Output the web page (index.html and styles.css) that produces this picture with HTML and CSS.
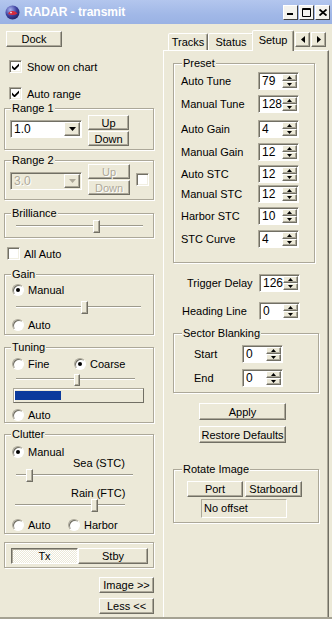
FILE: index.html
```html
<html>
<head>
    <link rel="stylesheet" href="styles.css">
</head>
<body>
<div class="window">
    <div class="titlebar">
        <svg class="app-icon" width="15" height="15" viewBox="0 0 15 15">
            <defs>
                <radialGradient id="ball" cx="0.35" cy="0.3" r="0.8">
                    <stop offset="0" stop-color="#a9b2ee"/>
                    <stop offset="0.55" stop-color="#3c409e"/>
                    <stop offset="1" stop-color="#1c1d58"/>
                </radialGradient>
            </defs>
            <circle cx="7.5" cy="7.5" r="7" fill="url(#ball)"/>
            <path d="M3 8.5 Q4.5 5.5 8 6 Q11 6.2 12.5 8.5 Q9.5 10.5 6.5 10 Q4 9.8 3 8.5 Z" fill="#d42a3c"/>
            <circle cx="6" cy="7.6" r="0.8" fill="#fff"/>
        </svg>
        <span class="title">RADAR - transmit</span>
        <div class="caption-buttons">
            <span class="cap-btn"><svg width="7" height="8"><rect x="0" y="5" width="6" height="2" fill="#000"/></svg></span>
            <span class="cap-btn"><svg width="9" height="9"><path d="M0.5 0.5h8v8h-8z M0 1.5h9" stroke="#000" fill="none"/></svg></span>
            <span class="cap-btn"><svg width="8" height="7"><path d="M0.5 0.5l7 6M7.5 0.5l-7 6" stroke="#000" stroke-width="1.8"/></svg></span>
        </div>
    </div>

    <div class="client">
        <div class="left">
            <button class="button dock">Dock</button>
            <label class="check show-chart"><span class="box"><svg width="7" height="7"><path d="M0 2.5L2.5 5L7 0.5V3L2.5 7.5L0 5Z"/></svg></span>Show on chart</label>
            <label class="check auto-range"><span class="box"><svg width="7" height="7"><path d="M0 2.5L2.5 5L7 0.5V3L2.5 7.5L0 5Z"/></svg></span>Auto range</label>

            <fieldset class="group range1">
                <legend>Range 1</legend>
                <div class="range-row">
                    <div class="combo">
                        <span class="combo-val">1.0</span>
                        <span class="combo-btn"><svg width="7" height="4"><path d="M0 0h7L3.5 4z"/></svg></span>
                    </div>
                    <div class="updown">
                        <button class="button">Up</button>
                        <button class="button">Down</button>
                    </div>
                </div>
            </fieldset>

            <fieldset class="group range2">
                <legend>Range 2</legend>
                <div class="range-row">
                    <div class="combo disabled">
                        <span class="combo-val">3.0</span>
                        <span class="combo-btn"><svg width="7" height="4"><path d="M0 0h7L3.5 4z" fill="#aca899"/></svg></span>
                    </div>
                    <div class="updown">
                        <button class="button" disabled>Up</button>
                        <button class="button" disabled>Down</button>
                    </div>
                    <span class="box"></span>
                </div>
            </fieldset>

            <fieldset class="group brilliance">
                <legend>Brilliance</legend>
                <div class="slider brill-slider"><div class="track"></div><span class="thumb" style="left: 77px"></span></div>
            </fieldset>

            <label class="check all-auto"><span class="box"></span>All Auto</label>

            <fieldset class="group gain">
                <legend>Gain</legend>
                <label class="opt gain-manual"><span class="radio on"></span>Manual</label>
                <div class="slider gain-slider"><div class="track"></div><span class="thumb" style="left: 65px"></span></div>
                <label class="opt gain-auto"><span class="radio"></span>Auto</label>
            </fieldset>

            <fieldset class="group tuning">
                <legend>Tuning</legend>
                <div class="opt-row tune-mode">
                    <label class="opt fine"><span class="radio"></span>Fine</label>
                    <label class="opt"><span class="radio on"></span>Coarse</label>
                </div>
                <div class="slider tune-slider"><div class="track"></div><span class="thumb small" style="left: 58px"></span></div>
                <div class="progress"><div class="progress-fill" style="width: 46px"></div></div>
                <label class="opt tune-auto"><span class="radio"></span>Auto</label>
            </fieldset>

            <fieldset class="group clutter">
                <legend>Clutter</legend>
                <label class="opt clutter-manual"><span class="radio on"></span>Manual</label>
                <div class="slider-label sea-label">Sea (STC)</div>
                <div class="slider sea-slider"><div class="track"></div><span class="thumb" style="left: 10px"></span></div>
                <div class="slider-label rain-label">Rain (FTC)</div>
                <div class="slider rain-slider"><div class="track"></div><span class="thumb" style="left: 76px"></span></div>
                <div class="opt-row clutter-mode">
                    <label class="opt auto-opt"><span class="radio"></span>Auto</label>
                    <label class="opt"><span class="radio"></span>Harbor</label>
                </div>
            </fieldset>

            <div class="txbox">
                <button class="button tx pressed">Tx</button>
                <button class="button stby">Stby</button>
            </div>

            <button class="button side-btn image-btn">Image &gt;&gt;</button>
            <button class="button side-btn less-btn">Less &lt;&lt;</button>
        </div>

        <div class="tabctl">
            <div class="tab-strip">
                <span class="tab tracks">Tracks</span>
                <span class="tab status">Status</span>
                <span class="tab selected">Setup</span>
                <div class="tab-scroll">
                    <span class="scroll-btn"><svg width="4" height="7"><path d="M4 0v7L0 3.5z"/></svg></span>
                    <span class="scroll-btn"><svg width="4" height="7"><path d="M0 0v7L4 3.5z"/></svg></span>
                </div>
            </div>

            <div class="tab-panel">
                <fieldset class="group preset">
                    <legend>Preset</legend>
                    <div class="spin-row p1"><span class="spin-label">Auto Tune</span><div class="spin"><span class="spin-val">79</span><span class="spin-btns"><span class="spin-btn"><svg width="5" height="3"><path d="M2.5 0L5 3H0z"/></svg></span><span class="spin-btn"><svg width="5" height="3"><path d="M0 0h5L2.5 3z"/></svg></span></span></div></div>
                    <div class="spin-row p2"><span class="spin-label">Manual Tune</span><div class="spin"><span class="spin-val">128</span><span class="spin-btns"><span class="spin-btn"><svg width="5" height="3"><path d="M2.5 0L5 3H0z"/></svg></span><span class="spin-btn"><svg width="5" height="3"><path d="M0 0h5L2.5 3z"/></svg></span></span></div></div>
                    <div class="spin-row p3"><span class="spin-label">Auto Gain</span><div class="spin"><span class="spin-val">4</span><span class="spin-btns"><span class="spin-btn"><svg width="5" height="3"><path d="M2.5 0L5 3H0z"/></svg></span><span class="spin-btn"><svg width="5" height="3"><path d="M0 0h5L2.5 3z"/></svg></span></span></div></div>
                    <div class="spin-row p4"><span class="spin-label">Manual Gain</span><div class="spin"><span class="spin-val">12</span><span class="spin-btns"><span class="spin-btn"><svg width="5" height="3"><path d="M2.5 0L5 3H0z"/></svg></span><span class="spin-btn"><svg width="5" height="3"><path d="M0 0h5L2.5 3z"/></svg></span></span></div></div>
                    <div class="spin-row p5"><span class="spin-label">Auto STC</span><div class="spin"><span class="spin-val">12</span><span class="spin-btns"><span class="spin-btn"><svg width="5" height="3"><path d="M2.5 0L5 3H0z"/></svg></span><span class="spin-btn"><svg width="5" height="3"><path d="M0 0h5L2.5 3z"/></svg></span></span></div></div>
                    <div class="spin-row p6"><span class="spin-label">Manual STC</span><div class="spin"><span class="spin-val">12</span><span class="spin-btns"><span class="spin-btn"><svg width="5" height="3"><path d="M2.5 0L5 3H0z"/></svg></span><span class="spin-btn"><svg width="5" height="3"><path d="M0 0h5L2.5 3z"/></svg></span></span></div></div>
                    <div class="spin-row p7"><span class="spin-label">Harbor STC</span><div class="spin"><span class="spin-val">10</span><span class="spin-btns"><span class="spin-btn"><svg width="5" height="3"><path d="M2.5 0L5 3H0z"/></svg></span><span class="spin-btn"><svg width="5" height="3"><path d="M0 0h5L2.5 3z"/></svg></span></span></div></div>
                    <div class="spin-row p8"><span class="spin-label">STC Curve</span><div class="spin"><span class="spin-val">4</span><span class="spin-btns"><span class="spin-btn"><svg width="5" height="3"><path d="M2.5 0L5 3H0z"/></svg></span><span class="spin-btn"><svg width="5" height="3"><path d="M0 0h5L2.5 3z"/></svg></span></span></div></div>
                </fieldset>

                <div class="spin-row trigger"><span class="spin-label">Trigger Delay</span><div class="spin"><span class="spin-val">126</span><span class="spin-btns"><span class="spin-btn"><svg width="5" height="3"><path d="M2.5 0L5 3H0z"/></svg></span><span class="spin-btn"><svg width="5" height="3"><path d="M0 0h5L2.5 3z"/></svg></span></span></div></div>
                <div class="spin-row heading"><span class="spin-label">Heading Line</span><div class="spin"><span class="spin-val">0</span><span class="spin-btns"><span class="spin-btn"><svg width="5" height="3"><path d="M2.5 0L5 3H0z"/></svg></span><span class="spin-btn"><svg width="5" height="3"><path d="M0 0h5L2.5 3z"/></svg></span></span></div></div>

                <fieldset class="group sector">
                    <legend>Sector Blanking</legend>
                    <div class="spin-row s1"><span class="spin-label">Start</span><div class="spin"><span class="spin-val">0</span><span class="spin-btns"><span class="spin-btn"><svg width="5" height="3"><path d="M2.5 0L5 3H0z"/></svg></span><span class="spin-btn"><svg width="5" height="3"><path d="M0 0h5L2.5 3z"/></svg></span></span></div></div>
                    <div class="spin-row s2"><span class="spin-label">End</span><div class="spin"><span class="spin-val">0</span><span class="spin-btns"><span class="spin-btn"><svg width="5" height="3"><path d="M2.5 0L5 3H0z"/></svg></span><span class="spin-btn"><svg width="5" height="3"><path d="M0 0h5L2.5 3z"/></svg></span></span></div></div>
                </fieldset>

                <button class="button wide apply">Apply</button>
                <button class="button wide restore">Restore Defaults</button>

                <fieldset class="group rotate">
                    <legend>Rotate Image</legend>
                    <div class="rotate-row">
                        <button class="button port">Port</button>
                        <button class="button starboard">Starboard</button>
                    </div>
                    <div class="static">No offset</div>
                </fieldset>
            </div>
        </div>
    </div>
</div>
</body>
</html>
```

FILE: styles.css
```css
body {
    margin: 0;
    font-family: "Liberation Sans", Arial, sans-serif;
    font-size: 11px;
    color: #000;
    background-color: #ece9d8;
}
.window {
    width: 332px;
    height: 619px;
    box-sizing: border-box;
    display: flex;
    flex-direction: column;
    overflow: hidden;
    border-bottom: 2px solid #a5a293;
}

/* title bar */
.titlebar {
    flex: none;
    height: 24px;
    display: flex;
    align-items: center;
    padding-left: 5px;
    background: linear-gradient(#b3c6ee, #a1b8e7 60%, #9ab2e4);
}
.app-icon {
    flex: none;
}
.title {
    margin-left: 4px;
    color: #fff;
    font-size: 12px;
    font-weight: bold;
}
.caption-buttons {
    margin-left: auto;
    margin-right: 2px;
    display: flex;
    gap: 1px;
}
.cap-btn {
    width: 15px;
    height: 15px;
    box-sizing: border-box;
    display: flex;
    align-items: center;
    justify-content: center;
    background-color: #f4f3ee;
    border: 1px solid;
    border-color: #fff #404040 #404040 #fff;
}

.client {
    flex: 1;
    display: flex;
    min-height: 0;
}

/* common controls */
.button {
    font: inherit;
    color: #000;
    background-color: #ece9d8;
    border: 1px solid;
    border-color: #fff #716f64 #716f64 #fff;
    box-shadow: inset -1px -1px #aca899;
    padding: 0;
    height: 16px;
    box-sizing: border-box;
}
.button:disabled {
    color: #aca899;
    text-shadow: 1px 1px #fff;
}
.button.pressed {
    border-color: #716f64 #fff #fff #716f64;
    box-shadow: inset 1px 1px #aca899;
    background: repeating-conic-gradient(#fff 0 25%, #ece9d8 0 50%) 0 0 / 2px 2px;
}
.check {
    display: flex;
    align-items: center;
    gap: 5px;
    height: 13px;
}
.box {
    flex: none;
    width: 13px;
    height: 13px;
    box-sizing: border-box;
    display: flex;
    align-items: center;
    justify-content: center;
    background-color: #fff;
    border: 1px solid;
    border-color: #aca899 #fff #fff #aca899;
    box-shadow: inset 1px 1px #716f64, inset -1px -1px #f1efe2;
}
.opt {
    display: flex;
    align-items: center;
    gap: 4px;
    height: 14px;
    margin-left: 2px;
}
.opt-row {
    display: flex;
}
.radio {
    flex: none;
    width: 12px;
    height: 12px;
    box-sizing: border-box;
    border-radius: 50%;
    display: flex;
    align-items: center;
    justify-content: center;
    background-color: #fff;
    border: 1px solid;
    border-color: #aca899 #fff #fff #aca899;
    box-shadow: inset 1px 1px #716f64;
}
.radio.on::after {
    content: "";
    width: 4px;
    height: 4px;
    border-radius: 50%;
    background-color: #000;
}
.group {
    margin: 0;
    padding: 0 4px 0 5px;
    min-width: 0;
    width: 150px;
    box-sizing: border-box;
    border: 1px solid #aca899;
    box-shadow: inset 1px 1px #fff, 1px 1px #fff;
}
.group legend {
    padding: 0 1px;
    margin-left: 1px;
    line-height: 12px;
    background-color: #ece9d8;
}
.combo {
    display: flex;
    width: 72px;
    height: 18px;
    box-sizing: border-box;
    padding: 1px;
    background-color: #fff;
    border: 1px solid;
    border-color: #aca899 #fff #fff #aca899;
    box-shadow: inset 1px 1px #716f64;
}
.combo-val {
    flex: 1;
    padding-left: 2px;
    font-size: 12px;
    line-height: 14px;
}
.combo-btn {
    width: 16px;
    display: flex;
    align-items: center;
    justify-content: center;
    background-color: #ece9d8;
    border: 1px solid;
    border-color: #fff #716f64 #716f64 #fff;
    box-shadow: inset -1px -1px #aca899;
    box-sizing: border-box;
}
.combo.disabled {
    background-color: #ece9d8;
}
.combo.disabled .combo-val {
    color: #aca899;
    text-shadow: 1px 1px #fff;
}
.slider {
    position: relative;
    height: 14px;
    box-sizing: border-box;
    padding-top: 6px;
}
.track {
    border-top: 1px solid #9d9a8c;
    border-bottom: 1px solid #fff;
}
.thumb {
    position: absolute;
    top: 1px;
    width: 7px;
    height: 13px;
    box-sizing: border-box;
    background-color: #ece9d8;
    border: 1px solid;
    border-color: #fff #716f64 #716f64 #fff;
    box-shadow: inset -1px -1px #aca899;
}
.thumb.small {
    top: 2px;
    width: 6px;
    height: 12px;
}
.slider-label {
    line-height: 12px;
}
.progress {
    width: 131px;
    height: 15px;
    box-sizing: border-box;
    padding: 2px 1px;
    border: 1px solid;
    border-color: #aca899 #716f64 #716f64 #aca899;
    box-shadow: inset 1px 1px #fff;
}
.progress-fill {
    height: 100%;
    background-color: #0b3a9c;
}

/* left column */
.left {
    flex: none;
    width: 159px;
    box-sizing: border-box;
    padding: 7px 0 0 4px;
    display: flex;
    flex-direction: column;
    align-items: flex-start;
}
.dock {
    width: 56px;
    margin-left: 2px;
}
.show-chart {
    margin: 13px 0 0 5px;
}
.auto-range {
    margin: 14px 0 0 5px;
}
.range-row {
    display: flex;
    align-items: flex-start;
    gap: 6px;
}
.range-row .combo {
    margin-top: 6px;
}
.updown {
    display: flex;
    flex-direction: column;
    gap: 1px;
}
.updown .button {
    width: 41px;
    height: 15px;
}
.range1 {
    margin-top: 2px;
    padding-bottom: 3px;
}
.range1 .updown {
    margin-top: 1px;
}
.range2 {
    margin-top: 4px;
    padding-bottom: 4px;
}
.range2 .updown {
    margin-top: -2px;
}
.range2 .updown .button {
    width: 42px;
}
.range2 .box {
    margin-top: 7px;
}
.brilliance {
    margin-top: 7px;
    padding-bottom: 4px;
}
.brill-slider {
    margin-left: 6px;
    width: 127px;
}
.all-auto {
    margin: 9px 0 0 3px;
    gap: 4px;
}
.gain {
    margin-top: 8px;
    padding-bottom: 2px;
}
.gain-manual {
    margin-top: 3px;
}
.gain-slider {
    margin: 3px 0 0 6px;
    width: 125px;
}
.gain-auto {
    margin-top: 4px;
}
.tuning {
    margin-top: 6px;
}
.tune-mode {
    margin-top: 4px;
}
.fine {
    width: 60px;
}
.tune-slider {
    margin: 1px 0 0 6px;
    width: 119px;
}
.progress {
    margin: 2px 0 0 3px;
}
.tune-auto {
    margin-top: 5px;
}
.clutter {
    margin-top: 5px;
    padding-bottom: 1px;
}
.clutter-manual {
    margin-top: 5px;
}
.sea-label {
    margin: -2px 0 0 63px;
}
.sea-slider {
    margin: -1px 0 0 6px;
    width: 117px;
}
.rain-label {
    margin: 5px 0 0 61px;
}
.rain-slider {
    margin: -1px 0 0 5px;
    width: 110px;
}
.clutter-mode {
    margin-top: 6px;
}
.auto-opt {
    width: 54px;
}
.txbox {
    display: flex;
    width: 150px;
    box-sizing: border-box;
    margin-top: 8px;
    padding: 5px 5px 3px 6px;
    border: 1px solid #aca899;
    box-shadow: inset 1px 1px #fff, 1px 1px #fff;
}
.tx {
    width: 67px;
}
.stby {
    width: 70px;
}
.side-btn {
    width: 55px;
    margin-left: 95px;
}
.image-btn {
    margin-top: 9px;
}
.less-btn {
    margin-top: 5px;
}

/* tab control */
.tabctl {
    flex: none;
    width: 166px;
    margin-left: 4px;
    padding-top: 6px;
    display: flex;
    flex-direction: column;
}
.tab-strip {
    flex: none;
    height: 20px;
    display: flex;
    align-items: flex-end;
    padding-left: 5px;
}
.tab {
    height: 17px;
    box-sizing: border-box;
    display: flex;
    align-items: center;
    justify-content: center;
    background-color: #ece9d8;
    border: 1px solid;
    border-bottom: none;
    border-color: #fff #716f64 transparent #fff;
    border-radius: 2px 2px 0 0;
    box-shadow: inset -1px 0 #aca899;
}
.tab.tracks {
    width: 40px;
}
.tab.status {
    width: 46px;
}
.tab.selected {
    width: 42px;
    height: 21px;
    margin-left: -2px;
    margin-bottom: -1px;
    padding-bottom: 3px;
    position: relative;
    z-index: 1;
}
.tab-scroll {
    align-self: flex-start;
    margin: 2px 0 0 1px;
    display: flex;
    gap: 1px;
}
.scroll-btn {
    width: 15px;
    height: 15px;
    box-sizing: border-box;
    display: flex;
    align-items: center;
    justify-content: center;
    background-color: #ece9d8;
    border: 1px solid;
    border-color: #fff #716f64 #716f64 #fff;
    box-shadow: inset -1px -1px #aca899;
}
.tab-panel {
    flex: 1;
    border-left: 1px solid #fff;
    border-top: 1px solid #fff;
    border-right: 1px solid #716f64;
    box-shadow: inset -1px 0 #aca899;
    padding: 6px 0 0 9px;
    display: flex;
    flex-direction: column;
    align-items: flex-start;
}
.spin-row {
    display: flex;
    align-items: center;
    height: 18px;
}
.spin-label {
    width: 77px;
}
.spin {
    display: flex;
    width: 41px;
    height: 18px;
    box-sizing: border-box;
    padding: 1px;
    background-color: #fff;
    border: 1px solid;
    border-color: #aca899 #fff #fff #aca899;
    box-shadow: inset 1px 1px #716f64;
}
.spin-val {
    flex: 1;
    padding-left: 2px;
    font-size: 12px;
    line-height: 14px;
}
.spin-btns {
    width: 15px;
    display: flex;
    flex-direction: column;
}
.spin-btn {
    flex: 1;
    display: flex;
    align-items: center;
    justify-content: center;
    background-color: #ece9d8;
    border: 1px solid;
    border-color: #fff #716f64 #716f64 #fff;
    box-shadow: inset -1px -1px #aca899;
}
.preset {
    width: 142px;
    padding: 0 0 14px 7px;
}
.p1 { margin-top: 3px; }
.p2 { margin-top: 5px; }
.p3 { margin-top: 7px; }
.p4 { margin-top: 5px; }
.p5 { margin-top: 4px; }
.p6 { margin-top: 2px; }
.p7 { margin-top: 4px; }
.p8 { margin-top: 5px; }
.trigger {
    margin: 11px 0 0 14px;
}
.trigger .spin-label {
    width: 72px;
}
.heading {
    margin: 10px 0 0 9px;
}
.sector {
    width: 146px;
    margin-top: 7px;
    padding: 0 0 5px 7px;
}
.sector .spin-row {
    margin-top: 6px;
}
.sector .spin-label {
    width: 48px;
    margin-left: 13px;
}
.wide {
    width: 87px;
    height: 17px;
    margin-left: 26px;
}
.apply {
    margin-top: 10px;
}
.restore {
    margin-top: 6px;
}
.rotate {
    width: 146px;
    margin-top: 20px;
    padding: 0 0 4px 7px;
}
.rotate-row {
    display: flex;
    gap: 2px;
    margin: 6px 0 0 6px;
}
.port {
    width: 56px;
}
.starboard {
    width: 57px;
}
.static {
    width: 86px;
    height: 19px;
    box-sizing: border-box;
    margin: 2px 0 0 20px;
    padding-left: 2px;
    line-height: 17px;
    border: 1px solid;
    border-color: #aca899 #fff #fff #aca899;
}
```
